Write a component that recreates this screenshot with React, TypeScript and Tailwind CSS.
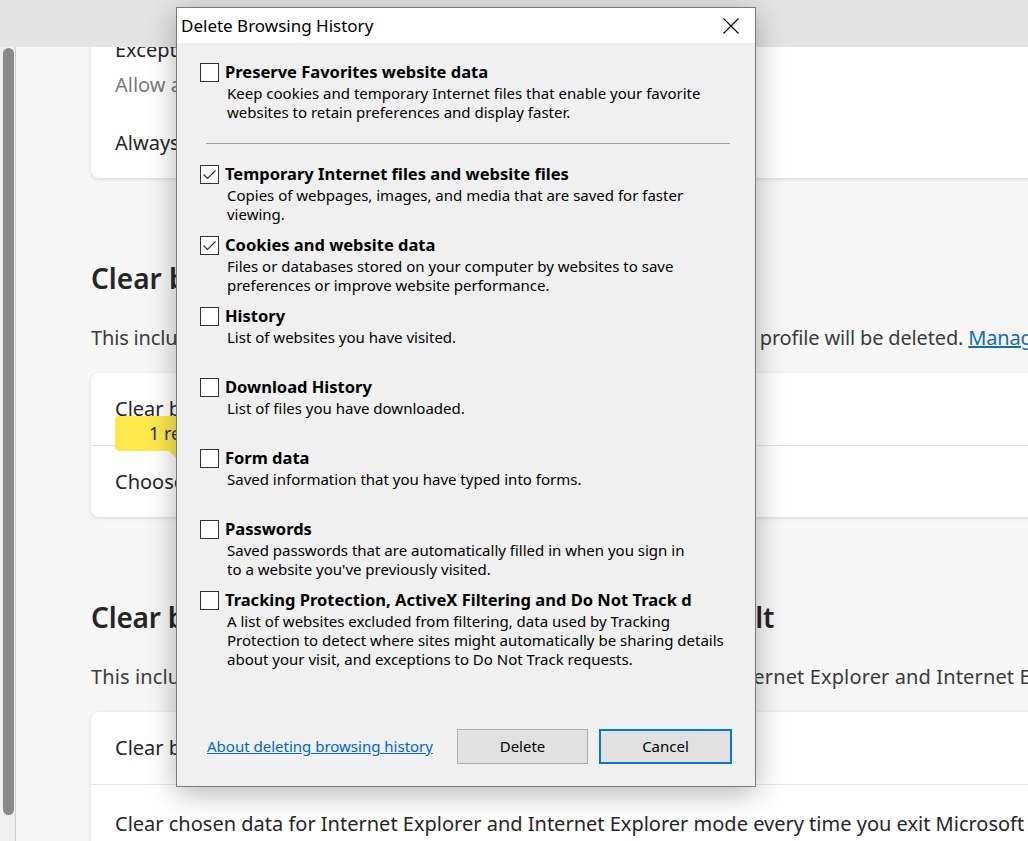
import type { ReactNode } from 'react';

const pageFont = { fontFamily: '"Noto Sans", "Open Sans", sans-serif' };
const dlgFont = { fontFamily: '"Noto Sans", "Liberation Sans", sans-serif' };

function CheckBox({ checked }: { checked?: boolean }) {
  return (
    <div className="flex h-[19px] w-[19px] shrink-0 items-center justify-center border border-[#333333] bg-white">
      {checked && (
        <svg width="17" height="17" viewBox="0 0 17 17" fill="none">
          <path d="M2.5 8.5 L6.5 12.5 L14.5 4.5" stroke="#333333" strokeWidth="1.2" />
        </svg>
      )}
    </div>
  );
}

interface OptionProps {
  title: string;
  checked?: boolean;
  children: ReactNode;
}

function Option({ title, checked, children }: OptionProps) {
  return (
    <div className="flex h-[71px] flex-col">
      <div className="flex items-center gap-[6px]">
        <CheckBox checked={checked} />
        <span className="whitespace-nowrap text-[16.5px] font-bold leading-[20px] text-black">
          {title}
        </span>
      </div>
      <p className="mt-[2px] pl-[27px] text-[15px] leading-[19px] text-black">
        {children}
      </p>
    </div>
  );
}

function DeleteHistoryDialog() {
  return (
    <div
      style={dlgFont}
      className="absolute left-[176px] top-[7px] flex h-[780px] w-[580px] flex-col border border-[#7a7a7a] bg-[#f0f0f0] shadow-[0_6px_28px_rgba(0,0,0,0.3)]"
    >
      <div className="flex h-[35px] shrink-0 items-center justify-between bg-white pl-[4px] pr-[16px]">
        <span className="text-[17px] text-black">Delete Browsing History</span>
        <svg width="16" height="16" viewBox="0 0 16 16">
          <path d="M0.5 0.5 L15.5 15.5 M15.5 0.5 L0.5 15.5" stroke="#000" strokeWidth="1.1" />
        </svg>
      </div>

      <div className="flex flex-1 flex-col px-[23px] pt-[19px]">
        <div className="flex flex-col">
          <div className="flex items-center gap-[6px]">
            <CheckBox />
            <span className="whitespace-nowrap text-[16.5px] font-bold leading-[20px] text-black">
              Preserve Favorites website data
            </span>
          </div>
          <p className="mt-[2px] pl-[27px] text-[15px] leading-[19px] text-black">
            Keep cookies and temporary Internet files that enable your favorite
            <br />
            websites to retain preferences and display faster.
          </p>
        </div>

        <div className="mb-[20px] ml-[6px] mr-[2px] mt-[21px] h-px bg-[#a0a0a0]" />

        <Option title="Temporary Internet files and website files" checked>
          Copies of webpages, images, and media that are saved for faster
          <br />
          viewing.
        </Option>
        <Option title="Cookies and website data" checked>
          Files or databases stored on your computer by websites to save
          <br />
          preferences or improve website performance.
        </Option>
        <Option title="History">List of websites you have visited.</Option>
        <Option title="Download History">List of files you have downloaded.</Option>
        <Option title="Form data">Saved information that you have typed into forms.</Option>
        <Option title="Passwords">
          Saved passwords that are automatically filled in when you sign in
          <br />
          to a website you've previously visited.
        </Option>
        <Option title="Tracking Protection, ActiveX Filtering and Do Not Track d">
          A list of websites excluded from filtering, data used by Tracking
          <br />
          Protection to detect where sites might automatically be sharing details
          <br />
          about your visit, and exceptions to Do Not Track requests.
        </Option>

        <div className="flex-1" />

        <div className="flex items-center pb-[22px]">
          <a className="ml-[7px] text-[15px] text-[#0066cc] underline">
            About deleting browsing history
          </a>
          <div className="flex-1" />
          <button className="h-[35px] w-[131px] border border-[#adadad] bg-[#e1e1e1] text-[15px] text-black">
            Delete
          </button>
          <button className="ml-[11px] h-[35px] w-[133px] border-2 border-[#0078d7] bg-[#e1e1e1] text-[15px] text-black">
            Cancel
          </button>
        </div>
      </div>
    </div>
  );
}

function Card({ children, className = '' }: { children: ReactNode; className?: string }) {
  return (
    <div
      className={`w-[1000px] shrink-0 rounded-lg bg-white shadow-[0_1px_4px_rgba(0,0,0,0.13)] ${className}`}
    >
      {children}
    </div>
  );
}

function Row({ children, divider, className = '' }: { children: ReactNode; divider?: boolean; className?: string }) {
  return (
    <div
      className={`flex h-[72px] items-center px-[24px] text-[20px] text-[#262626] ${divider ? 'border-t border-[#e6e6e6]' : ''} ${className}`}
    >
      <span className="whitespace-nowrap">{children}</span>
    </div>
  );
}

export default function App() {
  return (
    <div style={pageFont} className="relative h-[841px] w-[1028px] overflow-hidden bg-[#f7f7f7]">
      <div className="h-[47px] bg-[#e4e4e4]" />

      <div className="flex h-[794px]">
        <div className="flex w-[16px] shrink-0 border-r border-[#cfcfcf] bg-[#efefef] pb-[26px] pl-[3px] pr-[1px] pt-[1px]">
          <div className="w-[12px] rounded-full bg-[#8a8a8a]" />
        </div>

        <div className="flex min-w-0 flex-1 flex-col overflow-hidden pl-[75px]">
          <Card className="-mt-[40px] h-[171px] px-[24px] pt-[29px]">
            <div className="text-[20px] leading-[28px] text-[#262626]">Exceptions</div>
            <div className="mt-[7px] text-[20px] leading-[28px] text-[#7a7a7a]">
              Allow all cookies from these sites
            </div>
            <div className="mt-[30px] text-[20px] leading-[28px] text-[#262626]">
              Always clear cookies when windows are closed
            </div>
          </Card>

          <h2 className="mt-[82px] whitespace-nowrap text-[28px] font-semibold leading-[36px] text-[#262626]">
            Clear browsing data
          </h2>
          <p className="mt-[28px] whitespace-nowrap text-[20px] leading-[28px] tracking-[-0.16px] text-[#3b3b3b]">
            This includes history, passwords, cookies, and more. Only data from this profile will be deleted.{' '}
            <span className="text-[#0f6cbd] underline">Manage your data</span>
          </p>

          <Card className="relative mt-[21px]">
            <Row>Clear browsing data now</Row>
            <Row divider>Choose what to clear every time you close the browser</Row>
            <div className="absolute left-[24px] top-[43px] flex h-[35px] w-[200px] items-center rounded-[4px] bg-[#fde94c] pl-[34px] text-[18px] text-[#333333]">
              1 result
              <div className="absolute bottom-[-9px] left-[53px] h-0 w-0 border-l-[10px] border-t-[10px] border-l-transparent border-t-[#fde94c]" />
            </div>
          </Card>

          <h2 className="mt-[82px] whitespace-nowrap text-[28px] font-semibold leading-[36px] tracking-[-0.2px] text-[#262626]">
            Clear browsing data in Internet Explorer by default
          </h2>
          <p className="mt-[28px] whitespace-nowrap text-[20px] leading-[28px] tracking-[0.13px] text-[#3b3b3b]">
            This includes history, passwords, cookies, and other site data from Internet Explorer and Internet Explorer mode
          </p>

          <Card className="mt-[21px]">
            <Row>Clear browsing data for Internet Explorer</Row>
            <Row divider className="pt-[6px]">
              Clear chosen data for Internet Explorer and Internet Explorer mode every time you exit Microsoft Edge
            </Row>
          </Card>
        </div>
      </div>

      <DeleteHistoryDialog />
    </div>
  );
}
